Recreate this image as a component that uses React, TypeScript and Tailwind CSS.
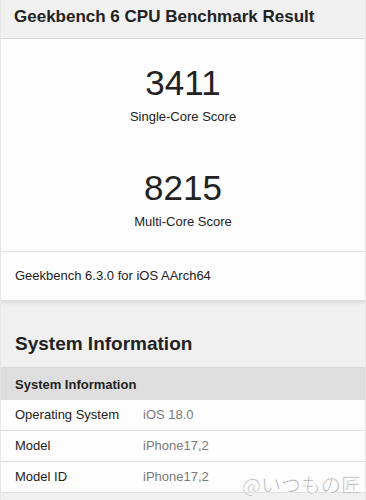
import React from 'react';

const rows = [
  { label: 'Operating System', value: 'iOS 18.0' },
  { label: 'Model', value: 'iPhone17,2' },
  { label: 'Model ID', value: 'iPhone17,2' },
];

function Score({ value, label }: { value: string; label: string }) {
  return (
    <div className="flex flex-col items-center">
      <div className="text-[35px] leading-[40px] text-[#222]">{value}</div>
      <div className="mt-[6px] text-[13px] leading-[16px] text-[#222]">{label}</div>
    </div>
  );
}

export default function App() {
  return (
    <div className="relative h-[500px] w-[366px] overflow-hidden bg-[#f0f0f0] font-['Liberation_Sans',Arial,sans-serif] border-x border-[#e6e6e6]">
      <div className="h-[39px] border-b border-[#d6d6d6] bg-[#f1f1f1] px-[13px] pt-[7px]">
        <h1 className="text-[17px] font-bold leading-[20px] text-[#222]">Geekbench 6 CPU Benchmark Result</h1>
      </div>

      <div className="bg-[#fdfdfd] shadow-[0_2px_3px_rgba(0,0,0,0.08)]">
        <div className="flex flex-col gap-[43px] pt-[24px] pb-[21px] border-b border-[#e4e4e4]">
          <Score value="3411" label="Single-Core Score" />
          <Score value="8215" label="Multi-Core Score" />
        </div>
        <div className="h-[49px] px-[14px] pt-[16px] text-[13px] leading-[16px] text-[#222] border-b border-[#dcdcdc]">
          Geekbench 6.3.0 for iOS AArch64
        </div>
      </div>

      <div className="px-[14px] pt-[32px] pb-[12px]">
        <h2 className="text-[19px] font-bold leading-[22px] text-[#222]">System Information</h2>
      </div>

      <div className="h-[33px] border-t border-[#d8d8d8] bg-[#dedede] px-[14px] pt-[9px] text-[13px] font-bold leading-[16px] text-[#222]">
        System Information
      </div>
      <div className="bg-[#fdfdfd]">
        {rows.map((r) => (
          <div key={r.label} className="flex h-[31px] items-center border-b border-[#dedede] px-[14px] text-[13px]">
            <div className="w-[128px] text-[#222]">{r.label}</div>
            <div className="text-[#7a7a7a]">{r.value}</div>
          </div>
        ))}
      </div>

      <div
        className="absolute right-[4px] bottom-[3px] text-[20px] leading-[24px] text-[#b0b0b0] font-['Noto_Sans_CJK_JP',sans-serif]"
        style={{ WebkitTextStroke: '0.6px #ffffff', textShadow: '0 0 1px #fff' }}
      >
        @いつもの匠
      </div>
    </div>
  );
}
